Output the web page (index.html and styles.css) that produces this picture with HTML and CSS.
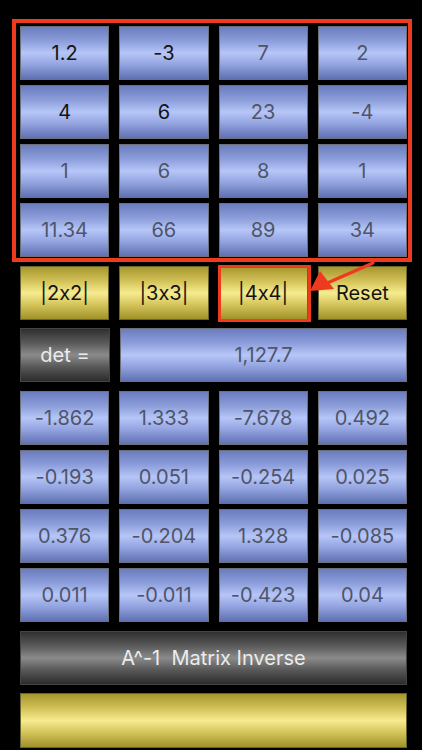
FILE: index.html
```html
<!DOCTYPE html>
<html>
<head>
<meta charset="utf-8">
<link rel="stylesheet" href="styles.css">
</head>
<body>
<div class="app">
  <div class="grid4 matrix">
    <div class="cell blue dark">1.2</div>
    <div class="cell blue dark">-3</div>
    <div class="cell blue">7</div>
    <div class="cell blue">2</div>
    <div class="cell blue dark">4</div>
    <div class="cell blue dark">6</div>
    <div class="cell blue">23</div>
    <div class="cell blue">-4</div>
    <div class="cell blue">1</div>
    <div class="cell blue">6</div>
    <div class="cell blue">8</div>
    <div class="cell blue">1</div>
    <div class="cell blue">11.34</div>
    <div class="cell blue">66</div>
    <div class="cell blue">89</div>
    <div class="cell blue">34</div>
  </div>
  <div class="grid4 buttons">
    <div class="cell yellow">|2x2|</div>
    <div class="cell yellow">|3x3|</div>
    <div class="cell yellow">|4x4|</div>
    <div class="cell yellow">Reset</div>
  </div>
  <div class="det-row">
    <div class="cell gray">det =</div>
    <div class="cell blue">1,127.7</div>
  </div>
  <div class="grid4 inverse">
    <div class="cell blue">-1.862</div>
    <div class="cell blue">1.333</div>
    <div class="cell blue">-7.678</div>
    <div class="cell blue">0.492</div>
    <div class="cell blue">-0.193</div>
    <div class="cell blue">0.051</div>
    <div class="cell blue">-0.254</div>
    <div class="cell blue">0.025</div>
    <div class="cell blue">0.376</div>
    <div class="cell blue">-0.204</div>
    <div class="cell blue">1.328</div>
    <div class="cell blue">-0.085</div>
    <div class="cell blue">0.011</div>
    <div class="cell blue">-0.011</div>
    <div class="cell blue">-0.423</div>
    <div class="cell blue">0.04</div>
  </div>
  <div class="cell gray wide">A^-1&nbsp;&nbsp;Matrix Inverse</div>
  <div class="cell yellow bar"></div>
</div>
<div class="mark mark-matrix"></div>
<div class="mark mark-btn"></div>
<svg class="arrow" width="422" height="750" viewBox="0 0 422 750">
  <line x1="373" y1="263" x2="325" y2="284" stroke="#ee3a1e" stroke-width="3.2" stroke-linecap="round"/>
  <polygon points="310,291 320,271 334,289" fill="#ee3a1e"/>
</svg>
</body>
</html>
```

FILE: styles.css
```css
html, body {
  margin: 0;
  padding: 0;
  background: #000;
}
body {
  width: 422px;
  height: 750px;
  overflow: hidden;
  position: relative;
  font-family: "Inter", "Liberation Sans", sans-serif;
  font-feature-settings: "calt" 0;
}
.app {
  padding: 26px 15px 0 20px;
  width: 387px;
}
.grid4 {
  display: grid;
  grid-template-columns: repeat(4, 1fr);
  column-gap: 10px;
  row-gap: 5px;
}
.cell {
  box-sizing: border-box;
  height: 54px;
  display: flex;
  align-items: center;
  justify-content: center;
  font-size: 20px;
  font-weight: 400;
  color: #4f5569;
  border: 1px solid #6c6f7c;
}
.blue {
  background: linear-gradient(to bottom, #6b7cbf 0%, #8e9fdc 28%, #b6c6f8 50%, #93a4e0 72%, #6070b2 100%);
}
.dark {
  color: #141414;
}
.yellow {
  color: #141414;
  border-color: #6a6430;
  background: linear-gradient(to bottom, #a6972c 0%, #d3c35a 28%, #f6eb8f 50%, #d5c55b 72%, #a09129 100%);
}
.gray {
  color: #ececec;
  border-color: #444;
  background: linear-gradient(to bottom, #2f2f2f 0%, #5c5c5c 28%, #8b8b8b 50%, #5a5a5a 72%, #2c2c2c 100%);
}
.buttons {
  margin-top: 9px;
}
.det-row {
  margin-top: 8px;
  display: grid;
  grid-template-columns: 90px 1fr;
  column-gap: 10px;
}
.inverse {
  margin-top: 9px;
}
.wide {
  margin-top: 9px;
}
.bar {
  margin-top: 8px;
  height: 55px;
}
.mark {
  position: absolute;
  box-sizing: border-box;
  border: 4px solid #ee3a1e;
}
.mark-matrix {
  left: 12px;
  top: 19px;
  width: 400px;
  height: 243px;
}
.mark-btn {
  left: 218px;
  top: 265px;
  width: 93px;
  height: 57px;
  border-width: 3px;
}
.arrow {
  position: absolute;
  left: 0;
  top: 0;
}
```
